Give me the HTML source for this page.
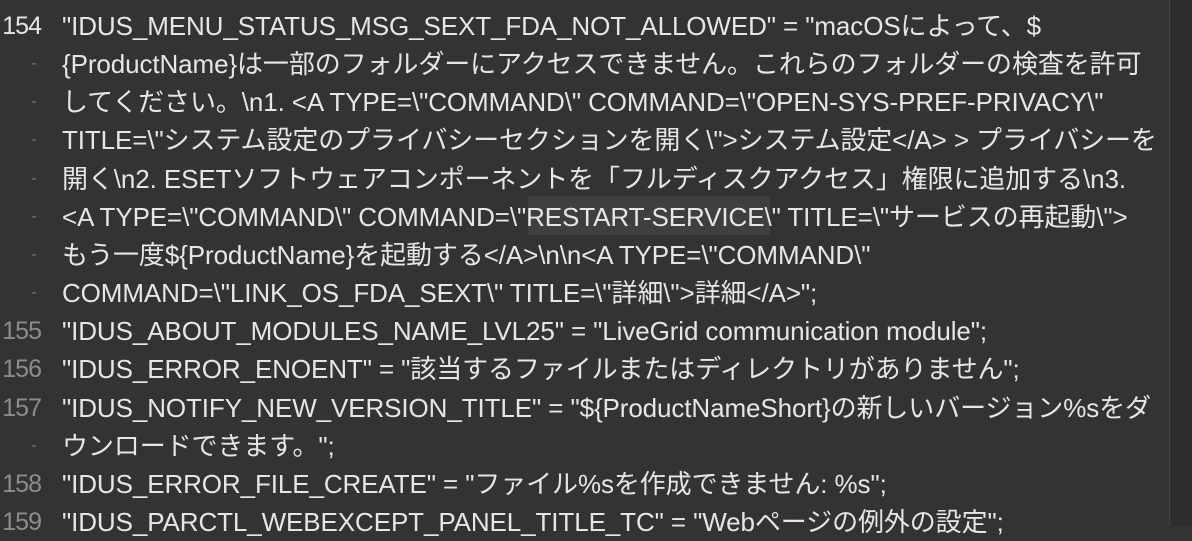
<!DOCTYPE html>
<html><head><meta charset="utf-8"><style>
html,body{margin:0;padding:0;background:#333333;width:1192px;height:526px;overflow:hidden}
body{font-family:"Liberation Sans","Noto Sans CJK JP",sans-serif;font-size:26px;color:#e6e6e6}
.l{position:absolute;left:0;height:38px;line-height:38px;white-space:nowrap;width:1170px}
.n{position:absolute;left:0;width:41px;text-align:right;color:#8c8c8c;font-size:25px;letter-spacing:-1px}
.n.cur{color:#e6e6e6}
.d{position:absolute;left:28px;width:12px;text-align:center;color:#777;font-size:16px}
.t{position:absolute;left:62px;letter-spacing:-0.1px}
.hl{position:absolute;left:528px;top:196px;width:242px;height:39px;background:#3f3f3f}
.div{position:absolute;left:1169px;top:0;width:1px;height:526px;background:#444}
.rt{position:absolute;left:1170px;top:0;width:22px;height:526px;background:#2e2e2e}
</style></head><body>
<div class="hl"></div>
<div class="rt"></div><div class="div"></div>
<div class="l" style="top:7px"><span class="n cur">154</span><span class="t">"IDUS_MENU_STATUS_MSG_SEXT_FDA_NOT_ALLOWED" = "macOSによって、$</span></div>
<div class="l" style="top:45px"><span class="d">-</span><span class="t">{ProductName}は一部のフォルダーにアクセスできません。これらのフォルダーの検査を許可</span></div>
<div class="l" style="top:83px"><span class="d">-</span><span class="t">してください。\n1. &lt;A TYPE=\"COMMAND\" COMMAND=\"OPEN-SYS-PREF-PRIVACY\"</span></div>
<div class="l" style="top:121px"><span class="d">-</span><span class="t">TITLE=\"システム設定のプライバシーセクションを開く\"&gt;システム設定&lt;/A&gt; &gt; プライバシーを</span></div>
<div class="l" style="top:160px"><span class="d">-</span><span class="t">開く\n2. ESETソフトウェアコンポーネントを「フルディスクアクセス」権限に追加する\n3.</span></div>
<div class="l" style="top:198px"><span class="d">-</span><span class="t">&lt;A TYPE=\"COMMAND\" COMMAND=\"RESTART-SERVICE\" TITLE=\"サービスの再起動\"&gt;</span></div>
<div class="l" style="top:236px"><span class="d">-</span><span class="t">もう一度${ProductName}を起動する&lt;/A&gt;\n\n&lt;A TYPE=\"COMMAND\"</span></div>
<div class="l" style="top:274px"><span class="d">-</span><span class="t">COMMAND=\"LINK_OS_FDA_SEXT\" TITLE=\"詳細\"&gt;詳細&lt;/A&gt;";</span></div>
<div class="l" style="top:312px"><span class="n">155</span><span class="t">"IDUS_ABOUT_MODULES_NAME_LVL25" = "LiveGrid communication module";</span></div>
<div class="l" style="top:350px"><span class="n">156</span><span class="t">"IDUS_ERROR_ENOENT" = "該当するファイルまたはディレクトリがありません";</span></div>
<div class="l" style="top:389px"><span class="n">157</span><span class="t">"IDUS_NOTIFY_NEW_VERSION_TITLE" = "${ProductNameShort}の新しいバージョン%sをダ</span></div>
<div class="l" style="top:427px"><span class="d">-</span><span class="t">ウンロードできます。";</span></div>
<div class="l" style="top:465px"><span class="n">158</span><span class="t">"IDUS_ERROR_FILE_CREATE" = "ファイル%sを作成できません: %s";</span></div>
<div class="l" style="top:503px"><span class="n">159</span><span class="t">"IDUS_PARCTL_WEBEXCEPT_PANEL_TITLE_TC" = "Webページの例外の設定";</span></div>
</body></html>
